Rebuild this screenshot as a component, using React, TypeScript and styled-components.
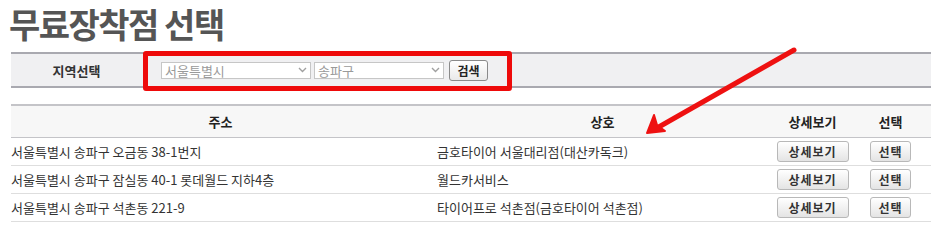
import React from 'react';
import styled, { createGlobalStyle } from 'styled-components';

const GlobalStyle = createGlobalStyle`
	html, body {
		margin: 0;
		padding: 0;
		background: #fff;
		font-family: 'Noto Sans CJK KR', 'Noto Sans', sans-serif;
		color: #333;
	}
`;

const shops = [
	{ addr: '서울특별시 송파구 오금동 38-1번지', name: '금호타이어 서울대리점(대산카독크)' },
	{ addr: '서울특별시 송파구 잠실동 40-1 롯데월드 지하4층', name: '월드카서비스' },
	{ addr: '서울특별시 송파구 석촌동 221-9', name: '타이어프로 석촌점(금호타이어 석촌점)' },
];

const Chevron = () => (
	<svg width="9" height="6" viewBox="0 0 9 6">
		<path d="M1 1 L4.5 4.5 L8 1" fill="none" stroke="#a0a0a0" strokeWidth="1.4" />
	</svg>
);

const App = () => {
	return (
		<Page>
			<GlobalStyle />
			<Title>무료장착점 선택</Title>

			{/* 지역선택 */}
			<SearchBar>
				<SearchLabel>지역선택</SearchLabel>
				<SearchControls>
					<SelectBox $width={150}>
						<span>서울특별시</span>
						<Chevron />
					</SelectBox>
					<SelectBox $width={130}>
						<span>송파구</span>
						<Chevron />
					</SelectBox>
					<SearchButton>검색</SearchButton>
				</SearchControls>
			</SearchBar>

			{/* list */}
			<Table>
				<HeadCell>주소</HeadCell>
				<HeadCell>상호</HeadCell>
				<HeadCell>상세보기</HeadCell>
				<HeadCell>선택</HeadCell>
				{shops.map((shop, index) => (
					<React.Fragment key={`shop-${index}`}>
						<Cell>{shop.addr}</Cell>
						<Cell $pad={7}>{shop.name}</Cell>
						<Cell $center>
							<GrayButton $width={72}>상세보기</GrayButton>
						</Cell>
						<Cell $center>
							<GrayButton $width={41}>선택</GrayButton>
						</Cell>
					</React.Fragment>
				))}
			</Table>

			{/* annotation */}
			<RedBox />
			<Arrow width="160" height="100" viewBox="0 0 160 100">
				<path d="M151 5 L14 83" stroke="#ee1111" strokeWidth="5" strokeLinecap="round" />
				<path d="M4 88 L11 70 L14 80 L22 86 Z" fill="#ee1111" stroke="#ee1111" strokeWidth="2" strokeLinejoin="round" />
			</Arrow>
		</Page>
	);
};

const Page = styled.div`
	position: relative;
	width: 938px;
	height: 251px;
	padding: 0 7px 0 11px;
	box-sizing: border-box;
`;

const Title = styled.h1`
	margin: 0 0 0 -2px;
	padding-top: 2px;
	height: 50px;
	font-size: 34px;
	line-height: 44px;
	font-weight: 700;
	color: #555;
	letter-spacing: -1.5px;
`;

const SearchBar = styled.div`
	display: flex;
	align-items: center;
	height: 36px;
	box-sizing: border-box;
	background: #f0f0f2;
	border-top: 2px solid #a9a9b0;
	border-bottom: 2px solid #a9a9b0;
`;

const SearchLabel = styled.div`
	width: 131px;
	text-align: center;
	font-size: 13px;
	font-weight: 700;
	color: #333;
`;

const SearchControls = styled.div`
	display: flex;
	align-items: center;
	gap: 3px;
	padding-left: 19px;
`;

const SelectBox = styled.div<{ $width: number }>`
	display: flex;
	align-items: center;
	justify-content: space-between;
	width: ${({ $width }) => $width}px;
	height: 17px;
	box-sizing: border-box;
	padding: 0 3px 0 3px;
	background: #fff;
	border: 1px solid #c6c6c6;
	font-size: 13px;
	color: #9a9a9a;
	line-height: 15px;
`;

const SearchButton = styled.div`
	display: flex;
	align-items: center;
	justify-content: center;
	width: 39px;
	height: 21px;
	margin-left: 2px;
	box-sizing: border-box;
	border: 1px solid #8a8a8a;
	border-radius: 3px;
	background: linear-gradient(#ffffff, #e9e9e9);
	font-size: 12px;
	font-weight: 700;
	color: #222;
`;

const Table = styled.div`
	display: grid;
	grid-template-columns: 419px 345px 75px 81px;
	margin-top: 16px;
	border-top: 2px solid #c4c4c8;
`;

const HeadCell = styled.div`
	display: flex;
	align-items: center;
	justify-content: center;
	height: 31px;
	background: #f7f7f7;
	border-bottom: 1px solid #c4c4c8;
	font-size: 13px;
	font-weight: 700;
	color: #222;
`;

const Cell = styled.div<{ $pad?: number; $center?: boolean }>`
	display: flex;
	align-items: center;
	justify-content: ${({ $center }) => ($center ? 'center' : 'flex-start')};
	height: 27px;
	padding-left: ${({ $pad }) => $pad || 0}px;
	border-bottom: 1px solid #dedede;
	font-size: 13px;
	color: #333;
	white-space: nowrap;
`;

const GrayButton = styled.div<{ $width: number }>`
	display: flex;
	align-items: center;
	justify-content: center;
	width: ${({ $width }) => $width}px;
	height: 21px;
	box-sizing: border-box;
	border: 1px solid #b8b8b8;
	border-radius: 3px;
	background: linear-gradient(#ffffff, #e4e4e4);
	font-size: 12px;
	font-weight: 700;
	color: #333;
	letter-spacing: 1px;
`;

const RedBox = styled.div`
	position: absolute;
	left: 143px;
	top: 51px;
	width: 369px;
	height: 40px;
	box-sizing: border-box;
	border: 5px solid #ee0a0a;
	border-radius: 3px;
`;

const Arrow = styled.svg`
	position: absolute;
	left: 643px;
	top: 45px;
`;

export default App;
